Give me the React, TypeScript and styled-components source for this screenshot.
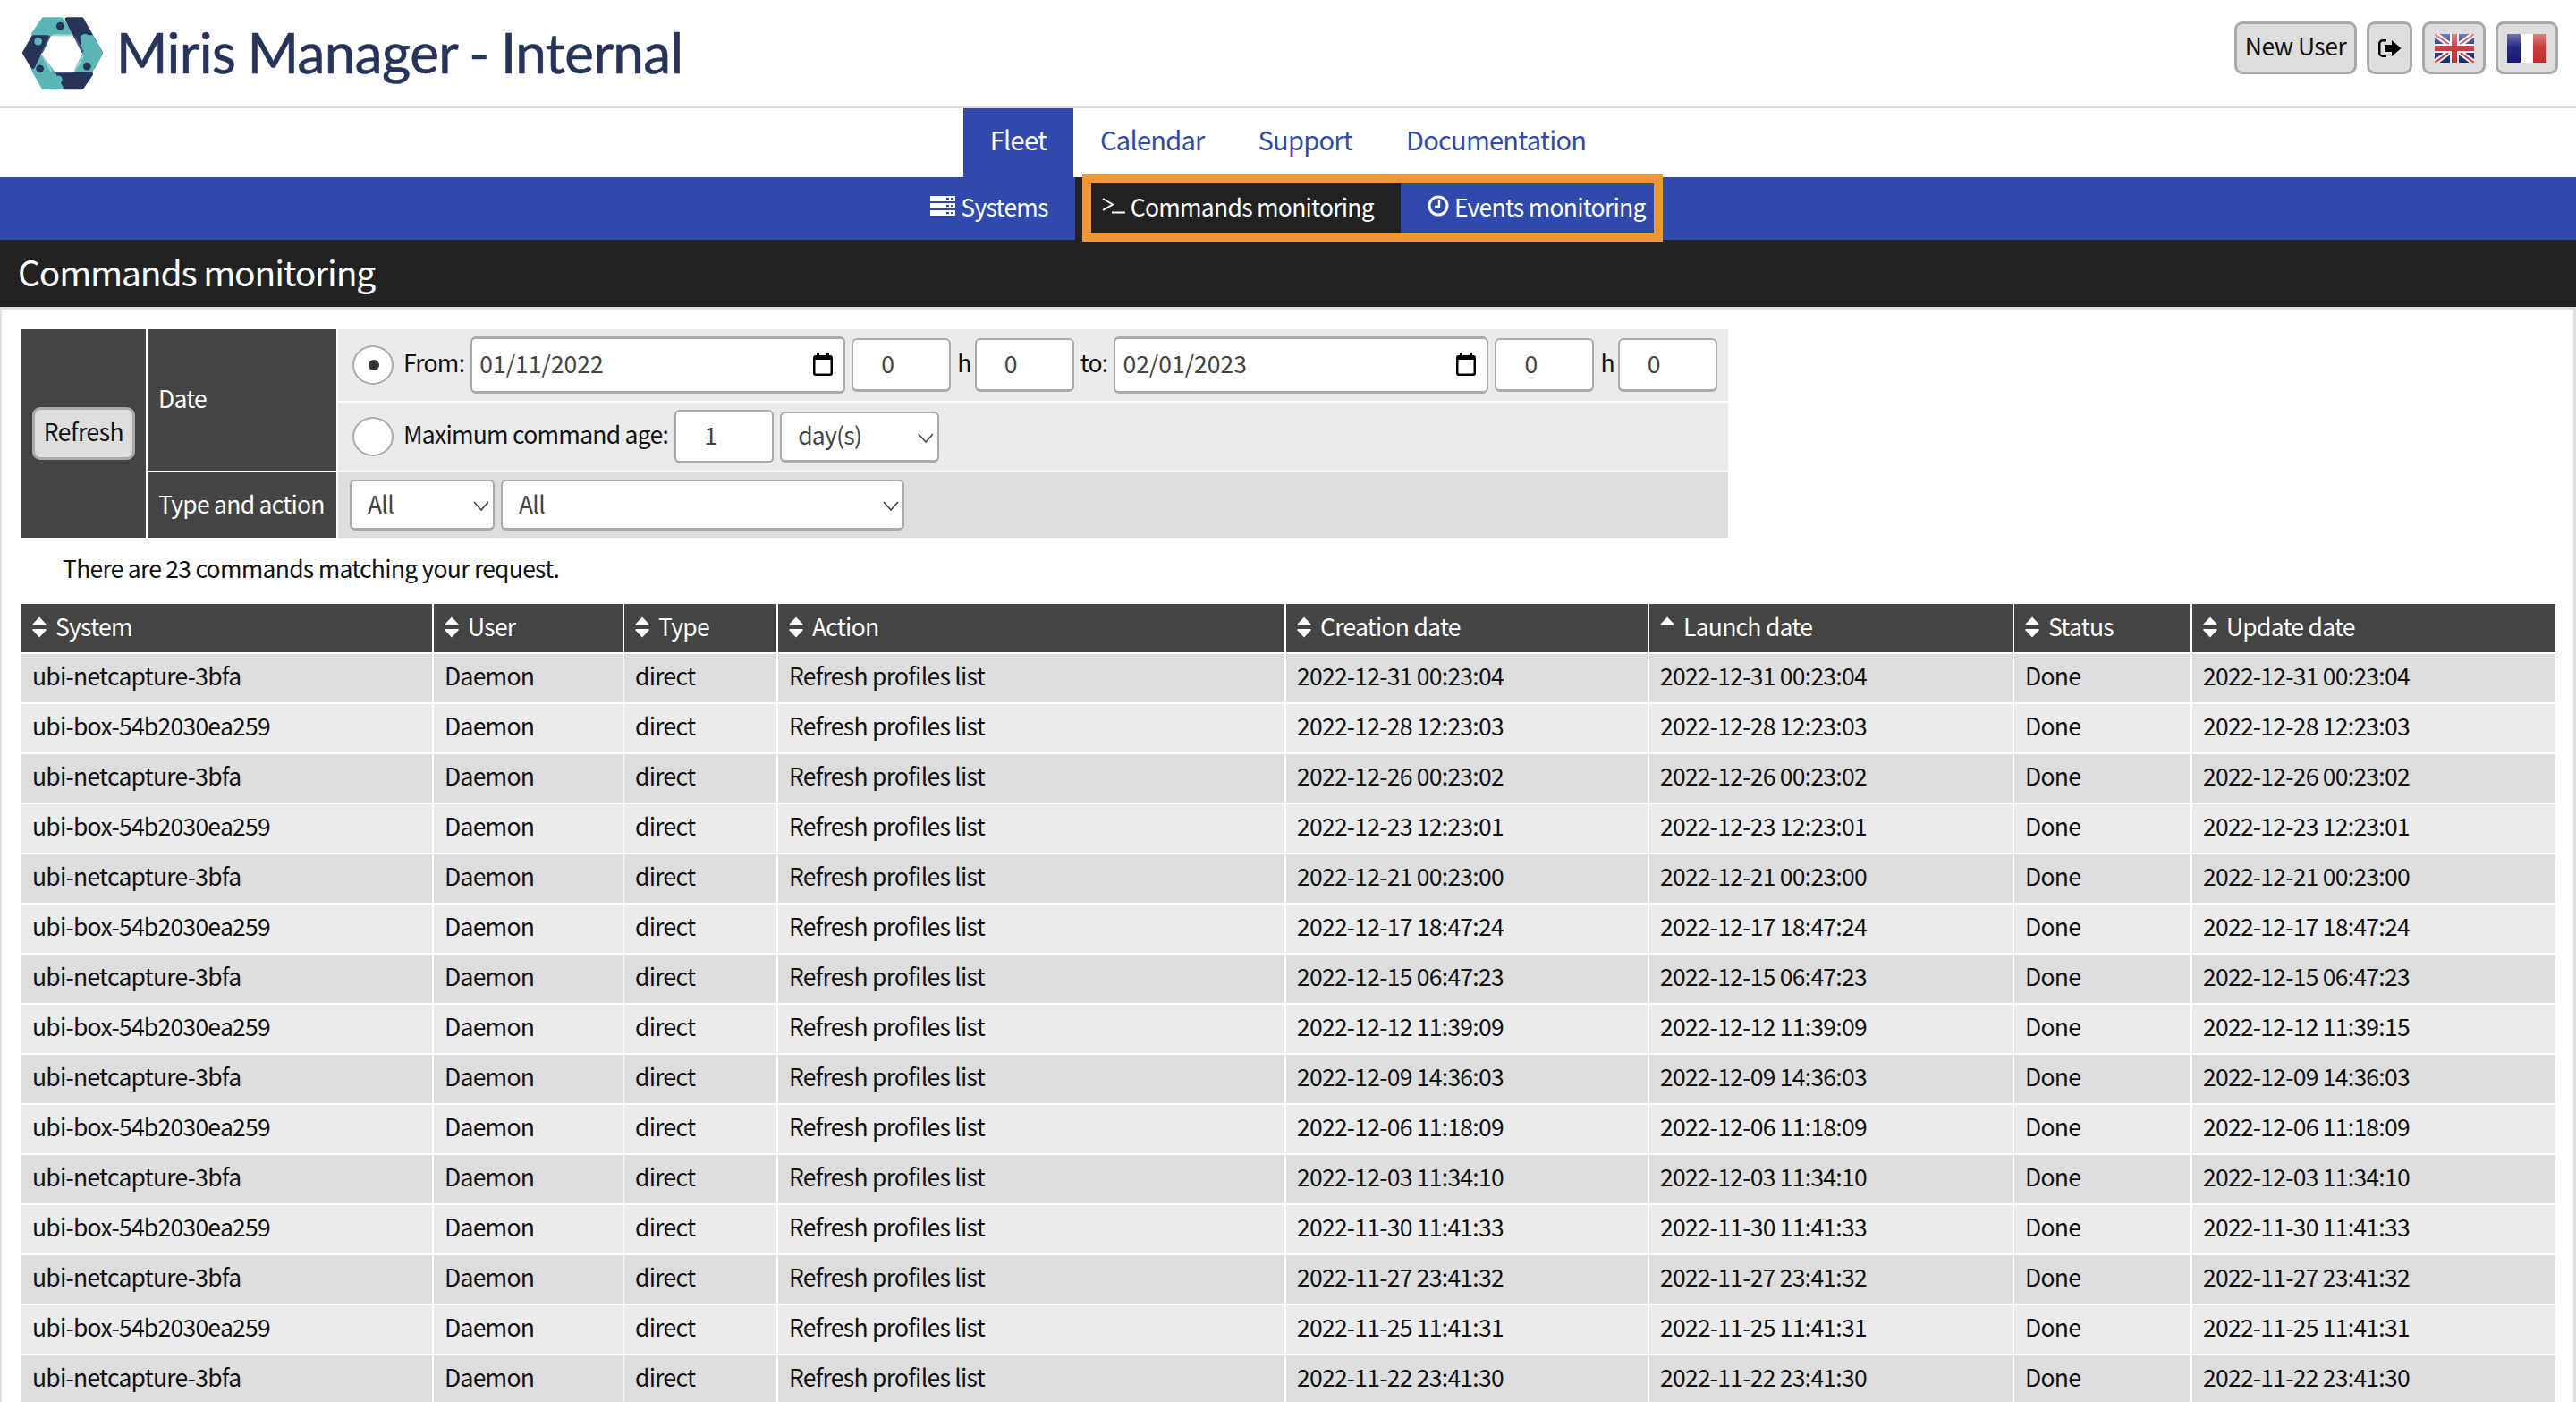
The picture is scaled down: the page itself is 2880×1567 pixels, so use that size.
import styled, { createGlobalStyle } from "styled-components";

const GlobalStyle = createGlobalStyle`
    html, body {
        margin: 0;
        height: 100%;
        overflow: hidden;
        background: #ffffff;
    }
    * {
        box-sizing: border-box;
    }
    body {
        font-family: "Noto Sans CJK JP", "Noto Sans", sans-serif;
        font-size: 26.5px;
        letter-spacing: -0.028em;
        color: #111111;
    }
`

const TopBar = styled.header`
    display: flex;
    justify-content: space-between;
    align-items: flex-start;
    height: 121px;
    border-bottom: 2px solid #dddddd;
`

const Brand = styled.div`
    display: flex;
    align-items: center;
    padding: 18px 0 0 25px;
    gap: 15px;
`

const BrandTitle = styled.h1`
    margin: 0 0 3px;
    font-family: Lato, "Noto Sans", sans-serif;
    font-weight: 400;
    font-size: 62px;
    letter-spacing: -0.6px;
    word-spacing: -2px;
    line-height: 80px;
    color: #27345a;
    -webkit-text-stroke: 0.6px #27345a;
`

const TopActions = styled.div`
    display: flex;
    align-items: flex-start;
    gap: 11px;
    padding: 24px 20px 0 0;
`

const GreyButton = styled.button<{ $width: number }>`
    display: flex;
    align-items: center;
    justify-content: center;
    width: ${p => p.$width}px;
    height: 59px;
    padding: 0 0 5px;
    border: 3px solid #aaaaaa;
    border-radius: 9px;
    background: #dddddd;
    color: #111111;
    font: inherit;
    letter-spacing: -0.02em;
    line-height: 1;
`

const IconButton = styled(GreyButton)`
    padding: 0;
`

const MainNav = styled.nav`
    display: flex;
    justify-content: center;
    height: 77px;
`

const MainTab = styled.a<{ $active?: boolean }>`
    padding: 0 30px;
    font-size: 29px;
    line-height: 68px;
    color: ${p => p.$active ? "#ffffff" : "#304aab"};
    background: ${p => p.$active ? "#304aab" : "transparent"};
`

const SubNav = styled.nav`
    display: flex;
    justify-content: center;
    height: 70px;
    background: #304aab;
`

const SubTabGroup = styled.div`
    position: relative;
    display: flex;
`

const SubTab = styled.a<{ $active?: boolean }>`
    display: flex;
    align-items: center;
    gap: 6px;
    padding: 0 30px 6px;
    color: #ffffff;
    background: ${p => p.$active ? "#222222" : "transparent"};
`

const Highlight = styled.div`
    position: absolute;
    top: -3px;
    bottom: -2px;
    left: 8px;
    right: 11px;
    border: 10px solid #f09637;
    pointer-events: none;
`

const TitleBar = styled.h2`
    margin: 0;
    height: 75px;
    padding-left: 20px;
    background: #222222;
    color: #ffffff;
    font-weight: 400;
    font-size: 39px;
    letter-spacing: -0.03em;
    line-height: 71px;
`

const Content = styled.main`
    padding: 22px 20px 0 22px;
    border: solid #dddddd;
    border-width: 3px 3px 0 2px;
`

const FilterGrid = styled.section`
    display: grid;
    grid-template-columns: 139px 211px 1554px;
    grid-template-rows: 80px 76px 73px;
    gap: 2px;
    width: 1908px;
`

const RefreshCell = styled.div`
    grid-row: 1 / span 3;
    display: flex;
    align-items: center;
    justify-content: center;
    background: #444444;
`

const FilterHead = styled.div<{ $rows: number }>`
    grid-row: span ${p => p.$rows};
    display: flex;
    align-items: center;
    padding: 0 0 5px 12px;
    background: #444444;
    color: #ffffff;
    white-space: nowrap;
`

const FilterBody = styled.div<{ $dark?: boolean }>`
    display: flex;
    align-items: center;
    gap: 7px;
    padding-left: ${p => p.$dark ? 13 : 16}px;
    background: ${p => p.$dark ? "#dddddd" : "#ebebeb"};
`

const Radio = styled.input`
    appearance: none;
    position: relative;
    flex: none;
    width: 46px;
    height: 44px;
    margin: 0 4px 0 0;
    border: 2px solid #aaaaaa;
    border-radius: 50%;
    background: #ffffff;

    &:checked::before {
        content: "";
        position: absolute;
        top: 14px;
        left: 16px;
        width: 12px;
        height: 12px;
        border-radius: 50%;
        background: #333333;
    }
`

const FieldLabel = styled.span`
    line-height: 40px;
    margin-top: -6px;
`

const HourMark = styled(FieldLabel)`
    margin-right: -3px;
`

const TextField = styled.input<{ $width: number }>`
    flex: none;
    width: ${p => p.$width}px;
    height: 60px;
    padding: 0 0 4px 31px;
    border: 2px solid #aaaaaa;
    border-bottom-width: 3px;
    border-radius: 6px;
    background: #ffffff;
    color: #444444;
    font: inherit;
    letter-spacing: inherit;
`

const DateBox = styled.div`
    position: relative;
    flex: none;
    width: 419px;
    height: 64px;
`

const DateField = styled.input`
    width: 100%;
    height: 100%;
    padding: 0 0 6px 8px;
    border: 2px solid #aaaaaa;
    border-width: 3px 2px;
    border-radius: 6px;
    background: #ffffff;
    color: #444444;
    font: inherit;
    letter-spacing: 0;
`

const CalendarMark = styled.svg`
    position: absolute;
    top: 18px;
    right: 14px;
    width: 22px;
    height: 26px;
`

const SelectBox = styled.div<{ $width: number }>`
    position: relative;
    flex: none;
    width: ${p => p.$width}px;
    height: 57px;
`

const SelectField = styled.select`
    appearance: none;
    width: 100%;
    height: 100%;
    padding: 0 0 4px 18px;
    border: 2px solid #aaaaaa;
    border-bottom-width: 3px;
    border-radius: 6px;
    background: #ffffff;
    color: #444444;
    font: inherit;
    letter-spacing: inherit;
`

const SelectChevron = styled.svg`
    position: absolute;
    top: 24px;
    right: 6px;
    width: 18px;
    height: 11px;
`

const Message = styled.p`
    margin: 0;
    padding: 14px 0 0 46px;
    height: 74px;
    line-height: 40px;
`

const RESULT_COLUMNS = "459px 211px 170px 566px 404px 406px 197px 406px";

const ResultRow = styled.div`
    display: grid;
    grid-template-columns: ${RESULT_COLUMNS};
    gap: 2px;
    height: 54px;
    margin-bottom: 2px;
`

const HeadCell = styled.div`
    display: flex;
    align-items: center;
    gap: 10px;
    padding: 0 0 6px 12px;
    background: #444444;
    color: #ffffff;
`

const BodyCell = styled.div<{ $alt: boolean }>`
    display: flex;
    align-items: center;
    padding: 0 0 7px 12px;
    background: ${p => p.$alt ? "#ebebeb" : "#dddddd"};
`

const SortGlyph = styled.svg`
    flex: none;
    margin-top: 3px;
`

const SortIcon = ({ ascOnly }: { ascOnly?: boolean }) => (
    <SortGlyph width="16" height="24" viewBox="0 0 16 24" fill="#ffffff">
        <path d="M8 0.500 15.500 8.500a1 1 0 0 1-.8 1.500H1.300a1 1 0 0 1-.8-1.500Z"/>
        {!ascOnly && <path d="M1.300 14h13.400a1 1 0 0 1 .8 1.500L8 23.500.5 15.500a1 1 0 0 1 .8-1.500Z"/>}
    </SortGlyph>
)

const ServerIcon = () => (
    <svg width="28" height="22" viewBox="0 0 28 22">
        <path fill="#ffffff" d="M0 0h28v6H0Zm0 8h28v6H0Zm0 8h28v6H0Z"/>
        <path fill="#304aab" d="M18 2h3v2h-3Zm5 0h3v2h-3ZM18 10h3v2h-3Zm5 0h3v2h-3ZM18 18h3v2h-3Zm5 0h3v2h-3Z"/>
    </svg>
)

const TerminalIcon = () => (
    <svg width="26" height="18" viewBox="0 0 26 18" fill="none" stroke="#ffffff" strokeWidth="2">
        <path d="M1 1 12 7.500 1 14"/>
        <path d="M11 16.500h15"/>
    </svg>
)

const ClockIcon = () => (
    <svg width="24" height="24" viewBox="0 0 24 24" fill="none" stroke="#ffffff">
        <circle cx="12" cy="12" r="10" strokeWidth="3"/>
        <path d="M13 6v7H8" strokeWidth="2.4"/>
    </svg>
)

const LogoutIcon = () => (
    <svg width="26" height="20" viewBox="0 0 26 20" fill="#000000">
        <path d="M9 0H5a5 5 0 0 0-5 5v10a5 5 0 0 0 5 5h4v-2.500H5A2.500 2.500 0 0 1 2.500 15V5A2.500 2.500 0 0 1 5 2.500h4Z"/>
        <path d="M7 6h8V1l10.500 9L15 19v-5H7Z"/>
    </svg>
)

const Gloss = ({ id }: { id: string }) => (
    <>
        <defs>
            <linearGradient id={id} x1="0" y1="0" x2="0" y2="1">
                <stop offset="0" stopColor="#ffffff" stopOpacity="0.4"/>
                <stop offset="0.45" stopColor="#ffffff" stopOpacity="0.08"/>
                <stop offset="1" stopColor="#ffffff" stopOpacity="0"/>
            </linearGradient>
        </defs>
        <rect width="44" height="32" fill={`url(#${id})`}/>
    </>
)

const UkFlag = () => (
    <svg width="44" height="32" viewBox="0 0 44 32">
        <rect width="44" height="32" fill="#1a2a80"/>
        <path d="M0 0 44 32M44 0 0 32" stroke="#ffffff" strokeWidth="6"/>
        <path d="M0 0 44 32M44 0 0 32" stroke="#c8303a" strokeWidth="2"/>
        <path d="M22 0v32M0 16h44" stroke="#ffffff" strokeWidth="10"/>
        <path d="M22 0v32M0 16h44" stroke="#c8303a" strokeWidth="6"/>
        <Gloss id="glossUk"/>
    </svg>
)

const FrFlag = () => (
    <svg width="44" height="32" viewBox="0 0 44 32">
        <rect width="15" height="32" fill="#14177a"/>
        <rect x="15" width="15" height="32" fill="#ffffff"/>
        <rect x="29" width="15" height="32" fill="#c52b2e"/>
        <Gloss id="glossFr"/>
    </svg>
)

const Logo = () => (
    <svg width="90" height="82" viewBox="75 55 270 245">
        <g strokeWidth="14" strokeLinejoin="round">
            <path fill="#5ab6b4" stroke="#5ab6b4" d="M112 112 146 62H205L240 111H172Z"/>
            <path fill="#27345a" stroke="#27345a" d="M225 62H274L338 175 312 222 283 176Z"/>
            <path fill="#5ab6b4" stroke="#5ab6b4" d="M276 122H308L338 175 305 233H256L284 178Z"/>
            <path fill="#27345a" stroke="#27345a" d="M186 246H305L274 291H215Z"/>
            <path fill="#5ab6b4" stroke="#5ab6b4" d="M112 232 139 190 180 245 205 291H146Z"/>
            <path fill="#27345a" stroke="#27345a" d="M112 122H160L132 176 110 222 82 175Z"/>
        </g>
        <circle cx="202" cy="85" r="13" fill="#27345a"/>
        <circle cx="286" cy="124" r="13" fill="#5ab6b4"/>
        <circle cx="292" cy="220" r="13" fill="#27345a"/>
        <circle cx="196" cy="264" r="13" fill="#5ab6b4"/>
        <circle cx="134" cy="228" r="13" fill="#27345a"/>
        <circle cx="128" cy="136" r="13" fill="#5ab6b4"/>
        <g fill="none" strokeWidth="5">
            <path stroke="#a6d6d4" d="M175 115H245"/>
            <path stroke="#4d5c8c" d="M168 118 141 174"/>
            <path stroke="#a6d6d4" d="M142 184 172 236"/>
            <path stroke="#4d5c8c" d="M180 241H244"/>
            <path stroke="#a6d6d4" d="M250 236 280 184"/>
            <path stroke="#4d5c8c" d="M280 172 250 120"/>
        </g>
    </svg>
)

const Calendar = () => (
    <CalendarMark viewBox="0 0 22 26">
        <path fill="#000000" d="M4 0h3v3h8V0h3v3h1a3 3 0 0 1 3 3v17a3 3 0 0 1-3 3H3a3 3 0 0 1-3-3V6a3 3 0 0 1 3-3h1Z"/>
        <path fill="#ffffff" d="M2.500 8h17v14.500a1 1 0 0 1-1 1h-15a1 1 0 0 1-1-1Z"/>
    </CalendarMark>
)

const Chevron = () => (
    <SelectChevron viewBox="0 0 18 11" fill="none" stroke="#444444" strokeWidth="1.600">
        <path d="M1 1 9 10 17 1"/>
    </SelectChevron>
)

const Select = ({ width, label }: { width: number; label: string }) => (
    <SelectBox $width={width}>
        <SelectField defaultValue={label}>
            <option>{label}</option>
        </SelectField>
        <Chevron/>
    </SelectBox>
)

const columns = ["System", "User", "Type", "Action", "Creation date", "Launch date", "Status", "Update date"];

const NET = "ubi-netcapture-3bfa";
const BOX = "ubi-box-54b2030ea259";

const commands: [string, string, string?][] = [
    [NET, "2022-12-31 00:23:04"],
    [BOX, "2022-12-28 12:23:03"],
    [NET, "2022-12-26 00:23:02"],
    [BOX, "2022-12-23 12:23:01"],
    [NET, "2022-12-21 00:23:00"],
    [BOX, "2022-12-17 18:47:24"],
    [NET, "2022-12-15 06:47:23"],
    [BOX, "2022-12-12 11:39:09", "2022-12-12 11:39:15"],
    [NET, "2022-12-09 14:36:03"],
    [BOX, "2022-12-06 11:18:09"],
    [NET, "2022-12-03 11:34:10"],
    [BOX, "2022-11-30 11:41:33"],
    [NET, "2022-11-27 23:41:32"],
    [BOX, "2022-11-25 11:41:31"],
    [NET, "2022-11-22 23:41:30"],
];

const App = () => {
    return (
        <>
            <GlobalStyle/>
            <TopBar>
                <Brand>
                    <Logo/>
                    <BrandTitle>Miris Manager - Internal</BrandTitle>
                </Brand>
                <TopActions>
                    <GreyButton $width={137}>New User</GreyButton>
                    <IconButton $width={51}><LogoutIcon/></IconButton>
                    <IconButton $width={71}><UkFlag/></IconButton>
                    <IconButton $width={70}><FrFlag/></IconButton>
                </TopActions>
            </TopBar>
            <MainNav>
                <MainTab $active>Fleet</MainTab>
                <MainTab>Calendar</MainTab>
                <MainTab>Support</MainTab>
                <MainTab>Documentation</MainTab>
            </MainNav>
            <SubNav>
                <SubTab><ServerIcon/>Systems</SubTab>
                <SubTabGroup>
                    <SubTab $active><TerminalIcon/>Commands monitoring</SubTab>
                    <SubTab><ClockIcon/>Events monitoring</SubTab>
                    <Highlight/>
                </SubTabGroup>
            </SubNav>
            <TitleBar>Commands monitoring</TitleBar>
            <Content>
                <FilterGrid>
                    <RefreshCell>
                        <GreyButton $width={115}>Refresh</GreyButton>
                    </RefreshCell>
                    <FilterHead $rows={2}>Date</FilterHead>
                    <FilterBody>
                        <Radio type="radio" name="range" defaultChecked/>
                        <FieldLabel>From:</FieldLabel>
                        <DateBox>
                            <DateField defaultValue="01/11/2022"/>
                            <Calendar/>
                        </DateBox>
                        <TextField $width={111} defaultValue="0"/>
                        <HourMark>h</HourMark>
                        <TextField $width={111} defaultValue="0"/>
                        <FieldLabel>to:</FieldLabel>
                        <DateBox>
                            <DateField defaultValue="02/01/2023"/>
                            <Calendar/>
                        </DateBox>
                        <TextField $width={111} defaultValue="0"/>
                        <HourMark>h</HourMark>
                        <TextField $width={111} defaultValue="0"/>
                    </FilterBody>
                    <FilterBody>
                        <Radio type="radio" name="range"/>
                        <FieldLabel>Maximum command age:</FieldLabel>
                        <TextField $width={111} defaultValue="1"/>
                        <Select width={178} label="day(s)"/>
                    </FilterBody>
                    <FilterHead $rows={1}>Type and action</FilterHead>
                    <FilterBody $dark>
                        <Select width={162} label="All"/>
                        <Select width={451} label="All"/>
                    </FilterBody>
                </FilterGrid>
                <Message>There are 23 commands matching your request.</Message>
                <section>
                    <ResultRow>
                        {columns.map(name => (
                            <HeadCell key={name}>
                                <SortIcon ascOnly={name === "Launch date"}/>
                                {name}
                            </HeadCell>
                        ))}
                    </ResultRow>
                    {commands.map(([system, date, updated], i) => (
                        <ResultRow key={date}>
                            <BodyCell $alt={i % 2 === 1}>{system}</BodyCell>
                            <BodyCell $alt={i % 2 === 1}>Daemon</BodyCell>
                            <BodyCell $alt={i % 2 === 1}>direct</BodyCell>
                            <BodyCell $alt={i % 2 === 1}>Refresh profiles list</BodyCell>
                            <BodyCell $alt={i % 2 === 1}>{date}</BodyCell>
                            <BodyCell $alt={i % 2 === 1}>{date}</BodyCell>
                            <BodyCell $alt={i % 2 === 1}>Done</BodyCell>
                            <BodyCell $alt={i % 2 === 1}>{updated ?? date}</BodyCell>
                        </ResultRow>
                    ))}
                </section>
            </Content>
        </>
    )
}

export default App
